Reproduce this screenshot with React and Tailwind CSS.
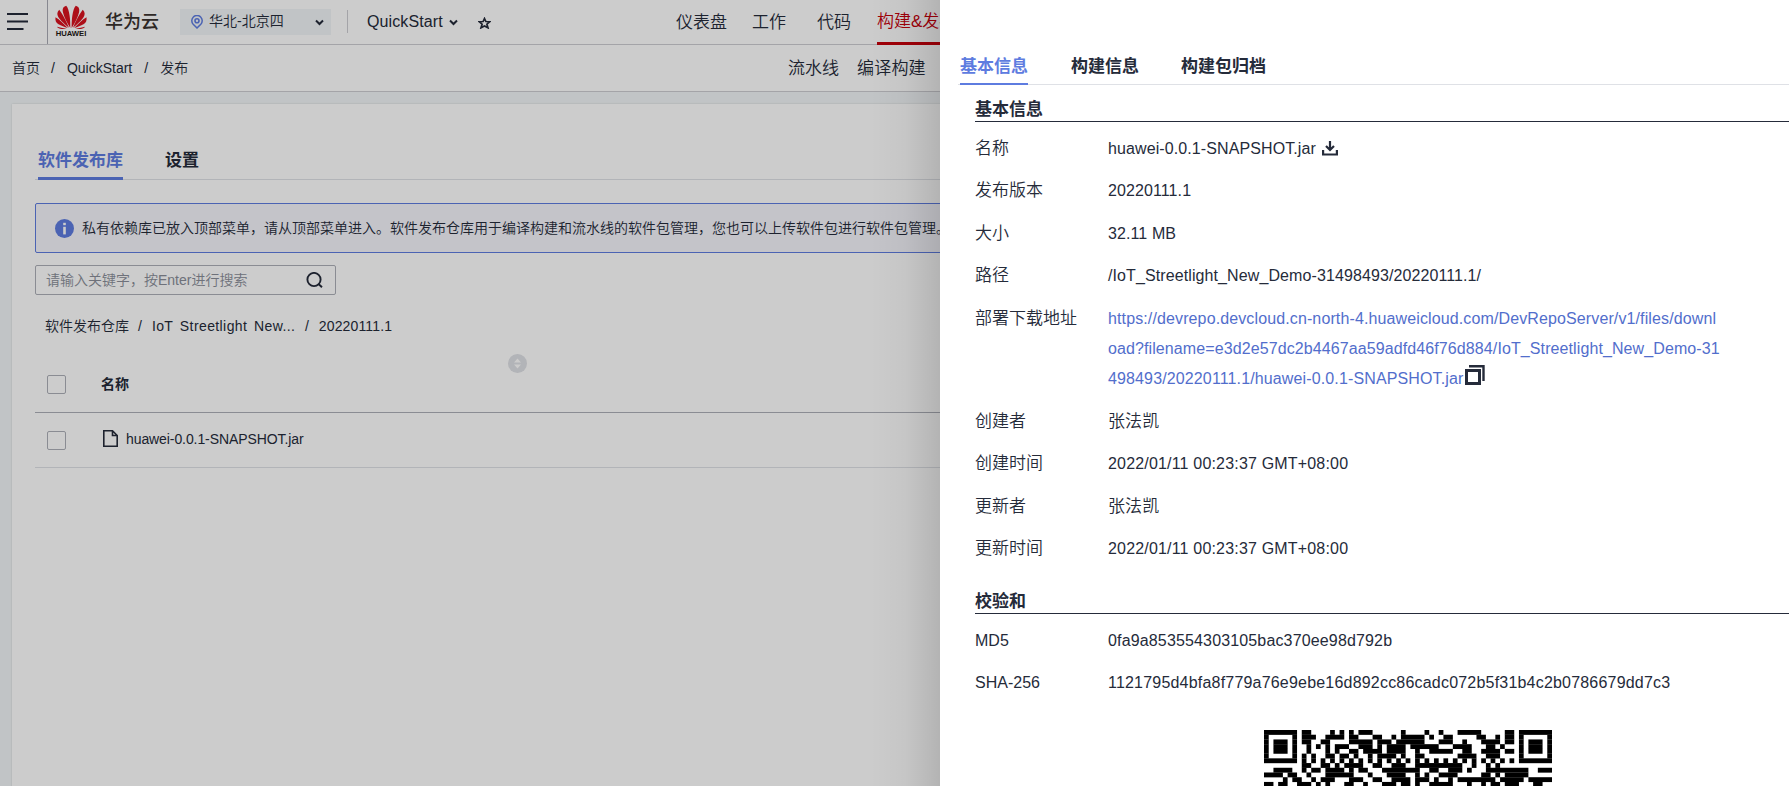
import React from "react";

// Dark modules of the QR code, one string per row, as "start-end" column ranges.
const QR_ROWS = [
  "0-6 8-9 14 16 18 20-22 29 34 37 41-45 51-52 54-60",
  "0 6 8-10 13-16 18-19 23-24 27 29-33 35 38-39 45-46 49 51-52 54 60",
  "0 2-4 6 8-9 12-13 18-22 24-26 28-33 37-39 42 46-49 51-52 54 56-58 60",
  "0 2-4 6 9 11 13 15-17 20-22 24 26-29 31-36 40-43 47-48 50 54 56-58 60",
  "0 2-4 6 9 13 15 18-19 21-24 26-29 32 35-39 42-43 46-49 51-52 54 56-58 60",
  "0 6 8 10 13-14 16-17 19 22 24-27 29 32-33 41-44 47-49 54 60",
  "0-6 8 10 12 14 16 18 20 22 24 26 28 30 32 34 36 38 40 42 44 46 48 50 52 54-60",
  "8-9 12-13 15 17-20 23-24 27-29 32-41 44 47 49",
  "2-5 8 10-11 13-16 18 20-21 25-32 35-36 39-41 43 47-55 58-60",
  "0-3 5-6 9 13-18 22 26-29 32 34 37-40 46-47 49 51-55",
  "4 6-7 10 12-14 18-20 23-24 27-30 32-34 36 39 41-48 50-54 56-60",
  "0-1 3-4 7-9 11 13 17-18 21 25-27 29-30 32 35-39 43 46 48-49 51-53 57-58",
];

function QrCode() {
  const rects = [];
  QR_ROWS.forEach((row, y) => {
    row.split(" ").forEach((range) => {
      const [a, b = a] = range.split("-").map(Number);
      rects.push(<rect key={y + "-" + a} x={a} y={y} width={b - a + 1} height={1.03} />);
    });
  });
  return (
    <svg className="h-[288px] w-[288px] shrink-0" viewBox="0 0 61 61" fill="#000">
      {rects}
    </svg>
  );
}

function HuaweiMark() {
  return (
    <svg className="h-[24px] w-[32px]" viewBox="0 0 32 24" fill="#d9121f">
      <path d="M15.3 23C15.5 15 14.5 4 11.2.7 8 1.5 7.2 4 8 7.500 9 12 12 18 15.300 23Z" />
      <path d="M16.700 23C16.500 15 17.500 4 20.800.7 24 1.500 24.800 4 24 7.500 23 12 20 18 16.700 23Z" />
      <path d="M14 22.700C11 15.500 7 8 4.200 4.800 2 7 1.800 9.500 3.300 12 5.200 15.200 10 19.500 14 22.700Z" />
      <path d="M18 22.700C21 15.500 25 8 27.800 4.800 30 7 30.200 9.500 28.700 12 26.800 15.200 22 19.500 18 22.700Z" />
      <path d="M12.800 23C9 19 4.500 14.500.5 12.300 0 15.500 1 18 3.500 19.300 6 20.700 9.500 22 12.800 23Z" />
      <path d="M19.200 23C23 19 27.500 14.500 31.500 12.300 32 15.500 31 18 28.500 19.300 26 20.700 22.500 22 19.200 23Z" />
      <path d="M11.500 23.600C8 23 4.500 22.500 2 21.700 3.500 24 7.500 24.600 11.500 23.600Z" />
      <path d="M20.500 23.600C24 23 27.500 22.500 30 21.700 28.500 24 24.500 24.600 20.500 23.600Z" />
    </svg>
  );
}

function Chevron() {
  return (
    <svg className="h-[7px] w-[9px] shrink-0" viewBox="0 0 9 7" fill="none" stroke="#252b3a" strokeWidth="2">
      <path d="M1 1.500 4.500 5 8 1.500" />
    </svg>
  );
}

function TopBar() {
  return (
    <div className="flex h-[45px] items-start border-b border-[#cdced2]">
      <svg className="ml-[7px] mt-[13px] h-[17px] w-[21px]" viewBox="0 0 21 17" fill="#252b3a">
        <rect width="21" height="2" />
        <rect y="7.500" width="21" height="2" />
        <rect y="15" width="16.500" height="2" />
      </svg>
      <div className="ml-[19px] h-[44px] w-px bg-[#a9abb5]" />
      <div className="ml-[7px] mt-[5px] flex w-[32px] flex-col items-center">
        <HuaweiMark />
        <span className="mt-px text-[7.700px] font-bold leading-[8px] text-[#231815]">HUAWEI</span>
      </div>
      <span className="ml-[18px] mt-[9px] w-[57px] whitespace-nowrap text-[18px] font-medium leading-[27px] text-[#3a322f]">华为云</span>
      <div className="ml-[18px] mt-[9px] flex h-[26px] w-[151px] items-center bg-[#f2f6f8] pl-[11px] pr-[7px]">
        <svg className="h-[14px] w-[12px]" viewBox="0 0 12 14" fill="none" stroke="#5e7ce0">
          <path d="M6 13 2.200 9.200A5.200 5.200 0 1 1 9.800 9.200Z" strokeWidth="1.500" />
          <circle cx="6" cy="5.700" r="2" strokeWidth="1.600" />
        </svg>
        <span className="ml-[6px] mt-[-2px] flex-1 whitespace-nowrap text-[14px] font-[350] leading-[26px]">华北-北京四</span>
        <Chevron />
      </div>
      <div className="ml-[16px] mt-[10px] h-[23px] w-px bg-[#cdced2]" />
      <span className="ml-[19px] mt-[9px] w-[82px] text-[16px] leading-[26px] tracking-[0.1px]">QuickStart</span>
      <div className="mt-[19px] flex">
        <Chevron />
      </div>
      <svg className="ml-[20px] mt-[17px] h-[12px] w-[13px]" viewBox="0 0 13 12" fill="none" stroke="#252b3a" strokeWidth="1.700">
        <path d="M6.500 1.500 7.900 4.500 11.800 4.700 8.900 7.200 10 10.800 6.500 8.900 3 10.800 4.100 7.200 1.200 4.700 5.100 4.500Z" />
      </svg>
      <nav className="ml-[185px] flex h-[45px] whitespace-nowrap text-[17px] font-[350] leading-[45px]">
        <span>仪表盘</span>
        <span className="ml-[25px]">工作</span>
        <span className="ml-[31px]">代码</span>
        <span className="ml-[26px] border-b-[3px] border-[#c7000b] leading-[43px] text-[#c7000b]">构建&amp;发布</span>
      </nav>
    </div>
  );
}

function SubBar() {
  return (
    <div className="flex h-[47px] items-center whitespace-nowrap border-b border-[#cdced2] pl-[12px]">
      <div className="flex w-[776px] text-[14px] font-[350] leading-[46px]">
        <span>首页</span>
        <span className="ml-[11px]">/</span>
        <span className="ml-[12px]">QuickStart</span>
        <span className="ml-[12px]">/</span>
        <span className="ml-[12px]">发布</span>
      </div>
      <div className="flex gap-[18px] text-[17px] font-[350] leading-[45px]">
        <span>流水线</span>
        <span className="tracking-[0.200px]">编译构建</span>
      </div>
    </div>
  );
}

function CheckBox() {
  return <div className="h-[19px] w-[19px] rounded-[2px] border border-[#adb0b8]" />;
}

function Repository() {
  return (
    <div className="ml-[12px] mt-[12px] h-[700px] bg-white pl-[23px] pt-[37px] font-[350] shadow-[0_0_2px_rgba(0,0,0,0.15)]">
      <div className="flex h-[39px] gap-[42px] border-b border-[#dfe1e6] pl-[3px] text-[17px] font-bold leading-[39px]">
        <span className="h-[39px] border-b-[3px] border-[#5e7ce0] text-[#5e7ce0]">软件发布库</span>
        <span>设置</span>
      </div>
      <div className="mt-[23px] flex h-[50px] items-center whitespace-nowrap rounded-[2px] border border-[#5e7ce0] bg-[#f5f5fc] pl-[19px] text-[14px]">
        <svg className="h-[19px] w-[19px] shrink-0" viewBox="0 0 19 19">
          <circle cx="9.500" cy="9.500" r="9.500" fill="#5e7ce0" />
          <rect x="8.200" y="3.800" width="2.600" height="2.400" fill="#fff" />
          <rect x="8.200" y="7.800" width="2.600" height="7.600" fill="#fff" />
        </svg>
        <span className="ml-[8px]">私有依赖库已放入顶部菜单，请从顶部菜单进入。软件发布仓库用于编译构建和流水线的软件包管理，您也可以上传软件包进行软件包管理。</span>
      </div>
      <div className="mt-[12px] flex h-[30px] w-[301px] items-center justify-between rounded-[2px] border border-[#adb0b8] pl-[10px] pr-[12px] text-[14px] text-[#8a8e99]">
        <span>请输入关键字，按Enter进行搜索</span>
        <svg className="h-[16px] w-[17px]" viewBox="0 0 17 16" fill="none" stroke="#252b3a" strokeWidth="1.900">
          <circle cx="8" cy="7.500" r="6.600" />
          <path d="M12.500 12 16 15.300" />
        </svg>
      </div>
      <div className="mt-[16px] flex h-[30px] items-center pl-[10px] text-[14px] leading-[30px]">
        <span>软件发布仓库</span>
        <span className="ml-[9px]">/</span>
        <span className="ml-[10px] w-[145px] whitespace-nowrap tracking-[0.400px] [word-spacing:2.500px]">IoT Streetlight New...</span>
        <span className="ml-[8px]">/</span>
        <span className="ml-[10px] tracking-[0.150px]">20220111.1</span>
      </div>
      <div className="flex h-[72px] items-start border-b border-[#adb0b8] pl-[12px] text-[14px] font-bold">
        <div className="mt-[34px]">
          <CheckBox />
        </div>
        <span className="ml-[35px] mt-[33px] w-[401px] leading-[20px]">名称</span>
        <svg className="ml-[6px] mt-[13px] h-[19px] w-[19px]" viewBox="0 0 19 19">
          <circle cx="9.500" cy="9.500" r="9.500" fill="#dfe1e6" />
          <path d="M9.500 4.500 13 8.500H6ZM9.500 14.500 13 10.500H6Z" fill="#fff" />
        </svg>
      </div>
      <div className="flex h-[55px] items-start border-b border-[#dfe1e6] pl-[12px] pt-[18px] text-[14px]">
        <CheckBox />
        <svg className="ml-[37px] mt-[-1px] h-[17px] w-[15px]" viewBox="0 0 15 17" fill="none" stroke="#252b3a" strokeWidth="1.600">
          <path d="M.8.8H9.500L14.200 5.500V16.200H.8ZM9.500.8V5.500H14.200" />
        </svg>
        <span className="ml-[8px] mt-[-2px] leading-[20px] tracking-[-0.090px]">huawei-0.0.1-SNAPSHOT.jar</span>
      </div>
    </div>
  );
}

function Row({ label, latin, children }) {
  return (
    <div className="mb-[12.100px] flex leading-[30.400px]">
      <span className={latin ? "w-[133px] shrink-0 text-[16px]" : "w-[133px] shrink-0 text-[17px] tracking-normal"}>{label}</span>
      {children}
    </div>
  );
}

function SectionTitle({ children }) {
  return <div className="h-[26px] border-b border-[#252b3a] text-[17px] font-bold leading-[27px]">{children}</div>;
}

function Drawer() {
  return (
    <aside className="absolute right-0 top-0 h-full w-[849px] overflow-hidden bg-white pl-[18px] pt-[48px] font-[350]">
      <div className="flex h-[37px] gap-[43px] border-b border-[#dfe1e6] pl-[2px] text-[17px] font-bold leading-[37px]">
        <span className="h-[37px] border-b-2 border-[#5e7ce0] text-[#5e7ce0]">基本信息</span>
        <span>构建信息</span>
        <span className="ml-[-1px]">构建包归档</span>
      </div>
      <div className="pl-[17px] pt-[11px]">
        <SectionTitle>基本信息</SectionTitle>
        <div className="pt-[11.600px] text-[16px] tracking-[0.100px]">
          <Row label="名称">
            <span>huawei-0.0.1-SNAPSHOT.jar</span>
            <svg className="ml-[6px] mt-[7px] h-[15px] w-[16px]" viewBox="0 0 16 15" fill="none" stroke="#252b3a" strokeWidth="2.200">
              <path d="M8 0V9M4 5 8 9 12 5M1.100 9V13.500H14.900V9" />
            </svg>
          </Row>
          <Row label="发布版本">20220111.1</Row>
          <Row label="大小">32.11 MB</Row>
          <Row label="路径">/IoT_Streetlight_New_Demo-31498493/20220111.1/</Row>
          <Row label="部署下载地址">
            <div className="text-[#526ecc]">
              <div className="tracking-[0.120px]">https://devrepo.devcloud.cn-north-4.huaweicloud.com/DevRepoServer/v1/files/downl</div>
              <div>oad?filename=e3d2e57dc2b4467aa59adfd46f76d884/IoT_Streetlight_New_Demo-31</div>
              <div className="flex tracking-[0.130px]">
                498493/20220111.1/huawei-0.0.1-SNAPSHOT.jar
                <svg className="ml-[2px] mt-px h-[20px] w-[20px]" viewBox="0 0 20 20" fill="none" stroke="#252b3a">
                  <path d="M1.500 5.500H14.500V18.500H1.500Z" strokeWidth="3" />
                  <path d="M4 1.200H18.500V16" strokeWidth="2.400" />
                </svg>
              </div>
            </div>
          </Row>
          <Row label="创建者"><span className="text-[17px]">张法凯</span></Row>
          <Row label="创建时间"><span className="tracking-[0.180px]">2022/01/11 00:23:37 GMT+08:00</span></Row>
          <Row label="更新者"><span className="text-[17px]">张法凯</span></Row>
          <Row label="更新时间"><span className="tracking-[0.180px]">2022/01/11 00:23:37 GMT+08:00</span></Row>
        </div>
        <div className="pt-[11.100px]">
          <SectionTitle>校验和</SectionTitle>
        </div>
        <div className="pt-[11.600px] text-[16px]">
          <Row label="MD5" latin><span className="tracking-[0.150px]">0fa9a853554303105bac370ee98d792b</span></Row>
          <Row label="SHA-256" latin><span className="tracking-[0.200px]">1121795d4bfa8f779a76e9ebe16d892cc86cadc072b5f31b4c2b0786679dd7c3</span></Row>
        </div>
        <div className="flex pl-[289px] pt-[19.400px]">
          <QrCode />
        </div>
      </div>
    </aside>
  );
}

export default function App() {
  return (
    <div className="relative h-[786px] w-[1789px] overflow-hidden bg-[#f2f6f8] font-['Liberation_Sans','Noto_Sans_CJK_SC',sans-serif] text-[#252b3a]">
      <div className="h-full overflow-hidden">
        <div className="bg-white">
          <TopBar />
          <SubBar />
        </div>
        <Repository />
      </div>
      <div className="absolute inset-0 bg-black/20" />
      <div className="absolute inset-y-0 left-[870px] w-[70px] bg-linear-to-r from-black/0 via-black/3 to-black/12" />
      <Drawer />
    </div>
  );
}
